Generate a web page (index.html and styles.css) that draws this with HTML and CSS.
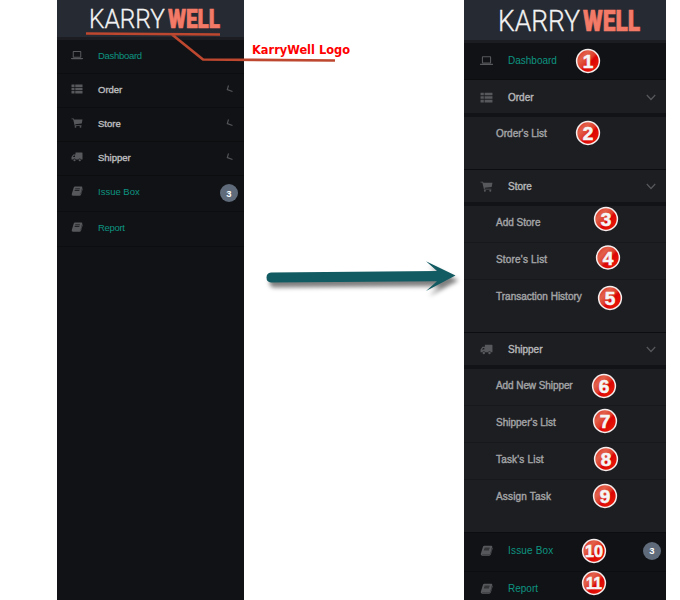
FILE: index.html
```html
<!DOCTYPE html>
<html lang="en">
<head>
<meta charset="utf-8">
<title>KarryWell menu</title>
<link rel="stylesheet" href="styles.css">
</head>
<body>
<svg class="defs" aria-hidden="true">
  <defs>
    <linearGradient id="red" x1="0" y1="0" x2="1" y2="1">
      <stop offset="0" stop-color="#dc2416"/><stop offset=".3" stop-color="#e2604a"/><stop offset=".5" stop-color="#de3a28"/><stop offset=".58" stop-color="#dc0505"/><stop offset="1" stop-color="#ee2408"/>
    </linearGradient>
    <symbol id="laptop" viewBox="0 0 24 20"><path fill-rule="evenodd" d="M5 2h14q1.500 0 1.500 1.500V14q0 1.500-1.500 1.500H5q-1.500 0-1.500-1.500V3.500Q3.500 2 5 2zm.5 2v9.500h13V4zM0 16.200h24v1q0 1.300-2 1.300H2q-2 0-2-1.300z"/></symbol>
    <symbol id="list" viewBox="0 0 24 20"><path d="M1 1h6v5H1zm7.500 0H23v5H8.500zM1 7.500h6v5H1zm7.500 0H23v5H8.500zM1 14h6v5H1zm7.500 0H23v5H8.500z"/></symbol>
    <symbol id="cart" viewBox="0 0 24 20"><path d="M1 1h4.500l.8 2H23l-1.500 8-13 1.500.4 1.500H21v1.700H7.300L4.300 2.700H1z"/><circle cx="9" cy="17.700" r="1.900"/><circle cx="19" cy="17.700" r="1.900"/></symbol>
    <symbol id="truck" viewBox="0 0 24 20"><path fill-rule="evenodd" d="M9 1h13q1 0 1 1v13h-3q-.4-2-2.500-2T15 15H9.500q-.4-2-2.500-2t-2.500 2H1V10L4.500 5H9zM8 7H5.800L3.500 10H8z"/><circle cx="7" cy="16.500" r="2.200"/><circle cx="17.500" cy="16.500" r="2.200"/></symbol>
    <symbol id="book" viewBox="0 0 24 20"><path fill-rule="evenodd" d="M8 1h13q2 0 1.500 2l-3.500 13q-.5 1.500-2 1.500H4.500q-1 0-1 .2h14q1.500 0 2-1.500L23 4q1 .8.500 2l-3.500 11.500Q19.300 19.500 17 19.500H4Q.5 19 1.500 16L5.500 3Q6 1 8 1zm.5 4-.4 1.300h9.400l.4-1.300zm-1 3.200-.4 1.300h9.400l.4-1.300z"/></symbol>
    <symbol id="chev" viewBox="0 0 10 7"><path d="M.8 1 5 5.500 9.200 1" fill="none" stroke="currentColor" stroke-width="1.200"/></symbol>
    <symbol id="tick" viewBox="0 0 8 8"><path d="M2.500.5 1.300 4.600 6.500 6.400" fill="none" stroke="currentColor" stroke-width="1.100"/></symbol>
  </defs>
</svg>
<main class="stage">
  <nav class="menu small">
    <header class="brand"><svg class="logo" viewBox="0 0 130 32"><text class="karry" x="-1" y="27.500" textLength="76" lengthAdjust="spacingAndGlyphs">KARRY</text><text class="well" x="78" y="27.500" textLength="52" lengthAdjust="spacingAndGlyphs">WELL</text></svg></header>
    <a class="row link"><svg class="icon"><use href="#laptop"/></svg><span class="tight">Dashboard</span></a>
    <a class="row"><svg class="icon"><use href="#list"/></svg><span>Order</span><svg class="tick"><use href="#tick"/></svg></a>
    <a class="row"><svg class="icon"><use href="#cart"/></svg><span>Store</span><svg class="tick"><use href="#tick"/></svg></a>
    <a class="row"><svg class="icon"><use href="#truck"/></svg><span>Shipper</span><svg class="tick"><use href="#tick"/></svg></a>
    <a class="row link issue"><svg class="icon"><use href="#book"/></svg><span>Issue Box</span><b class="count">3</b></a>
    <a class="row link report"><svg class="icon"><use href="#book"/></svg><span class="tight">Report</span></a>
  </nav>
  <nav class="menu large">
    <header class="brand"><svg class="logo" viewBox="0 0 141 34"><text class="karry" x="-1" y="30.500" textLength="82" lengthAdjust="spacingAndGlyphs">KARRY</text><text class="well" x="84" y="30.500" textLength="57" lengthAdjust="spacingAndGlyphs">WELL</text></svg></header>
    <a class="row link"><svg class="icon"><use href="#laptop"/></svg><span>Dashboard</span></a>
    <a class="row group first"><svg class="icon"><use href="#list"/></svg><span>Order</span><svg class="chev"><use href="#chev"/></svg></a>
    <div class="sub"><a class="last">Order's List</a></div>
    <a class="row group"><svg class="icon"><use href="#cart"/></svg><span>Store</span><svg class="chev"><use href="#chev"/></svg></a>
    <div class="sub"><a>Add Store</a><a class="wide">Store's List</a><a class="last">Transaction History</a></div>
    <a class="row group"><svg class="icon"><use href="#truck"/></svg><span>Shipper</span><svg class="chev"><use href="#chev"/></svg></a>
    <div class="sub"><a class="long">Add New Shipper</a><a>Shipper's List</a><a class="wide">Task's List</a><a class="last wide">Assign Task</a></div>
    <a class="row link issue"><svg class="icon"><use href="#book"/></svg><span class="wide">Issue Box</span><b class="count">3</b></a>
    <a class="row link report"><svg class="icon"><use href="#book"/></svg><span>Report</span></a>
  </nav>
  <svg class="notes" viewBox="0 0 680 600">
    <path class="callout" d="M86 33.500 220 34.500M172 34.500 203 59.500 335 60.500"/>
    <text class="label" x="252" y="54" textLength="98" lengthAdjust="spacingAndGlyphs">KarryWell Logo</text>
    <path class="arrow" d="M271 272.500 437 271 426 261.300 455.500 275.500 426 291 437 281.200 271 282.500Q266.500 282 266.500 277.500T271 272.500Z"/>
    <g class="pin" transform="translate(588 61)"><circle r="11.400"/><text y="7">1</text></g>
    <g class="pin" transform="translate(588 133)"><circle r="11.400"/><text y="7">2</text></g>
    <g class="pin" transform="translate(606 219)"><circle r="11.400"/><text y="7">3</text></g>
    <g class="pin" transform="translate(608 257.500)"><circle r="11.400"/><text y="7">4</text></g>
    <g class="pin" transform="translate(610 298)"><circle r="11.400"/><text y="7">5</text></g>
    <g class="pin" transform="translate(604 386)"><circle r="11.400"/><text y="7">6</text></g>
    <g class="pin" transform="translate(605 421)"><circle r="11.400"/><text y="7">7</text></g>
    <g class="pin" transform="translate(606 459)"><circle r="11.400"/><text y="7">8</text></g>
    <g class="pin" transform="translate(605 496)"><circle r="11.400"/><text y="7">9</text></g>
    <g class="pin" transform="translate(594 551)"><circle r="11.400"/><text y="6" class="two" textLength="18" lengthAdjust="spacingAndGlyphs">10</text></g>
    <g class="pin" transform="translate(594 583)"><circle r="11.400"/><text y="6" class="two" textLength="16" lengthAdjust="spacingAndGlyphs">11</text></g>
  </svg>
</main>
</body>
</html>
```
FILE: styles.css
```css
* { box-sizing: border-box; }
body { margin: 0; background: #fff; overflow: hidden; font-family: "Liberation Sans", Arial, sans-serif; }
.defs { position: absolute; width: 0; height: 0; }
.stage { position: relative; display: flex; justify-content: space-between; width: 680px; height: 600px; padding: 0 14px 0 57px; }
.menu { display: flex; flex-direction: column; height: 600px; overflow: hidden; background: #111215; font-size: 10px; }
.small { width: 187px; font-size: 9.500px; }
.large { width: 202px; }
.menu > * { flex-shrink: 0; }
.brand { display: flex; justify-content: center; background: #262a33; border-bottom: 3px solid #1b1d22; }
.small .brand { height: 40px; padding-left: 8px; }
.large .brand { height: 43px; padding-left: 9px; }
.logo { overflow: visible; }
.small .logo { width: 130px; height: 32px; }
.large .logo { width: 141px; height: 34px; }
.karry { font: 300 26px Roboto, sans-serif; fill: #f2f2f2; stroke: #f2f2f2; stroke-width: .3; }
.well { font: 900 26px Roboto, sans-serif; fill: #f37a67; stroke: #f37a67; stroke-width: .7; }
.large .karry, .large .well { font-size: 29px; }
.row { display: flex; align-items: center; height: 34px; padding: 0 10px 3px 14px; border-bottom: 1px solid #0c0d0f; color: #b9babc; }
.row span { margin-left: 15px; -webkit-text-stroke: .4px currentColor; }
.row.link { color: #0d9481; }
.row.link span { -webkit-text-stroke: 0; }
.small .row .tight { letter-spacing: -.3px; }
.row .wide, .sub .wide { letter-spacing: .18px; }
.icon { width: 12px; height: 10px; fill: #57585b; }
.tick { width: 8px; height: 8px; margin-left: auto; color: #55565a; }
.count { display: grid; place-items: center; width: 18px; height: 18px; margin: 0 -5px 0 auto; border-radius: 50%; background: #5f6b7a; color: #fff; font-size: 9.500px; }
.small .issue { height: 36px; padding-bottom: 5px; }
.small .count { margin-right: -4px; transform: translateY(2px); }
.small .report { height: 35px; padding-bottom: 4px; }
.large .row { height: 37px; padding: 0 10px 2px 16px; }
.large .row span { margin-left: 15px; }
.large .icon { width: 13px; height: 11px; }
.large .row.group { height: 36px; padding-bottom: 0; border-bottom: 4px solid #121317; background: #1d1e22; color: #b5b6b8; }
.large .row.first { height: 37px; padding-top: 1px; }
.chev { width: 10px; height: 7px; margin-left: auto; color: #57585c; }
.sub { background: #1d1e22; color: #a3a4a6; }
.sub a { display: flex; align-items: center; height: 37px; padding: 0 0 3px 32px; border-bottom: 1px solid #17181b; -webkit-text-stroke: .4px currentColor; }
.sub .long { letter-spacing: -.08px; }
.sub .last { height: 53px; padding-bottom: 19px; border-color: #0c0d0f; }
.large .row.issue { height: 39px; padding-bottom: 3px; }
.large .row.report { height: 37px; padding-bottom: 3px; }
.notes { position: absolute; left: 0; top: 0; width: 680px; height: 600px; }
.callout { fill: none; stroke: #bd472f; stroke-width: 2.700; }
.label { font: bold 12px "DejaVu Sans", Verdana, sans-serif; fill: #f00; }
.arrow { fill: #125b62; filter: drop-shadow(3px 5px 2px rgba(0,0,0,.5)); }
.pin circle { fill: url(#red); stroke: #f5eeee; stroke-width: 1.500; }
.pin text { fill: #f5f5f5; font: bold 19px "Liberation Sans", Arial, sans-serif; text-anchor: middle; stroke: #f5f5f5; stroke-width: .6; }
.pin .two { font-size: 17px; }
```
